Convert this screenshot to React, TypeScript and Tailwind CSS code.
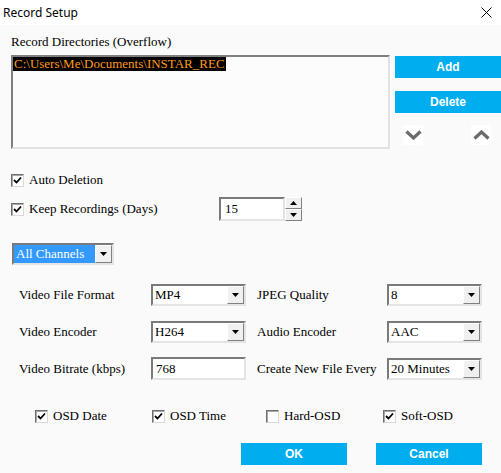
import React from 'react';

const serif = "font-['Liberation_Serif',serif] text-[13px] text-black";

function Check({ checked }: { checked: boolean }) {
  return (
    <span className="w-[13px] h-[13px] shrink-0 bg-white border border-t-[#6e6e6e] border-l-[#6e6e6e] border-r-[#d8d8d8] border-b-[#d8d8d8] shadow-[inset_1px_1px_0_#a8a8a8] flex items-center justify-center">
      {checked && (
        <svg width="9" height="9" viewBox="0 0 9 9">
          <path d="M1 4 L3.5 6.5 L8 1.5" stroke="#000" strokeWidth="1.8" fill="none" />
        </svg>
      )}
    </span>
  );
}

function CheckLabel({ checked, label, width }: { checked: boolean; label: string; width?: string }) {
  return (
    <div className={`flex items-center gap-[5px] ${width ?? ''}`}>
      <Check checked={checked} />
      <span className={serif}>{label}</span>
    </div>
  );
}

function Arrow({ up }: { up?: boolean }) {
  return (
    <svg width="7" height="4" viewBox="0 0 7 4">
      <path d={up ? 'M0 4 L3.5 0 L7 4 Z' : 'M0 0 L7 0 L3.5 4 Z'} fill="#000" />
    </svg>
  );
}

function Select({ value, width = 'w-[95px]', highlight }: { value: string; width?: string; highlight?: boolean }) {
  return (
    <div className={`${width} h-[22px] flex border-2 border-t-[#7a7a7a] border-l-[#7a7a7a] border-r-[#e4e4e4] border-b-[#e4e4e4] bg-white`}>
      <div className={`flex-1 flex items-center px-[2px] ${highlight ? 'bg-[#3399ff] text-white' : ''}`}>
        <span className={`font-['Liberation_Serif',serif] text-[13px] ${highlight ? 'text-white' : 'text-black'}`}>{value}</span>
      </div>
      <div className="w-[17px] bg-[#f0f0f0] border border-t-white border-l-white border-r-[#808080] border-b-[#808080] flex items-center justify-center">
        <Arrow />
      </div>
    </div>
  );
}

function BlueButton({ label, className = '' }: { label: string; className?: string }) {
  return (
    <button className={`h-[22px] bg-[#00adef] text-white font-['Liberation_Sans',sans-serif] font-bold text-[12px] flex items-center justify-center ${className}`}>
      {label}
    </button>
  );
}

function Chevron({ up }: { up?: boolean }) {
  return (
    <div className="w-[20px] h-[20px] bg-white flex items-center justify-center">
      <svg width="17" height="10" viewBox="0 0 17 10">
        <path d={up ? 'M1.5 8.5 L8.5 2 L15.5 8.5' : 'M1.5 1.5 L8.5 8 L15.5 1.5'} stroke="#6b6b6b" strokeWidth="3.2" fill="none" />
      </svg>
    </div>
  );
}

export default function App() {
  return (
    <div className="w-[501px] h-[473px] bg-[#fafafa] flex flex-col overflow-hidden">
      <div className="h-[25px] bg-white flex items-center justify-between pl-[3px] pr-[9px]">
        <span className="font-['Noto_Sans',sans-serif] text-[12px] text-black">Record Setup</span>
        <svg width="11" height="11" viewBox="0 0 11 11">
          <path d="M0.5 0.5 L10.5 10.5 M10.5 0.5 L0.5 10.5" stroke="#000" strokeWidth="1" />
        </svg>
      </div>

      <div className="pl-[11px] flex flex-col">
        <div className={`${serif} mt-[9px] h-[16px] leading-[16px]`}>Record Directories (Overflow)</div>

        <div className="flex mt-[5px]">
          <div className="w-[379px] h-[94px] border-2 border-t-[#7f7f7f] border-l-[#7f7f7f] border-r-[#e2e2e2] border-b-[#e2e2e2] bg-[#fcfcfc] flex flex-col items-start">
            <div className="flex items-center h-[14px] bg-black px-[1px]">
              <span className="font-['Liberation_Serif',serif] text-[13px] text-[#ff9a1f] leading-[14px]">C:\Users\Me\Documents\INSTAR_REC</span>
            </div>
          </div>
          <div className="ml-[5px] w-[106px] flex flex-col">
            <BlueButton label="Add" className="mt-[1px] w-[106px] h-[21px]" />
            <BlueButton label="Delete" className="mt-[13px] w-[106px] h-[21px]" />
            <div className="mt-[12px] flex pl-[8px] gap-[48px]">
              <Chevron />
              <Chevron up />
            </div>
          </div>
        </div>

        <div className="mt-[23px] h-[16px] flex items-center">
          <CheckLabel checked label="Auto Deletion" />
        </div>

        <div className="mt-[9px] h-[24px] flex items-center">
          <CheckLabel checked label="Keep Recordings (Days)" width="w-[208px]" />
          <div className="w-[66px] h-[24px] border-2 border-t-[#7a7a7a] border-l-[#7a7a7a] border-r-[#e4e4e4] border-b-[#e4e4e4] bg-white flex items-center px-[4px]">
            <span className={serif}>15</span>
          </div>
          <div className="w-[17px] h-[24px] flex flex-col">
            <div className="h-[12px] bg-[#f0f0f0] border border-t-white border-l-white border-r-[#808080] border-b-[#808080] flex items-center justify-center">
              <Arrow up />
            </div>
            <div className="h-[12px] bg-[#f0f0f0] border border-t-white border-l-white border-r-[#808080] border-b-[#808080] flex items-center justify-center">
              <Arrow />
            </div>
          </div>
        </div>

        <div className="mt-[22px] ml-[1px]">
          <Select value="All Channels" width="w-[102px]" highlight />
        </div>

        <div className="mt-[19px] flex items-center pl-[8px]">
          <span className={`${serif} w-[132px]`}>Video File Format</span>
          <Select value="MP4" />
          <span className={`${serif} w-[130px] ml-[11px]`}>JPEG Quality</span>
          <Select value="8" />
        </div>

        <div className="mt-[15px] flex items-center pl-[8px]">
          <span className={`${serif} w-[132px]`}>Video Encoder</span>
          <Select value="H264" />
          <span className={`${serif} w-[130px] ml-[11px]`}>Audio Encoder</span>
          <Select value="AAC" />
        </div>

        <div className="mt-[14px] flex items-center pl-[8px]">
          <span className={`${serif} w-[132px]`}>Video Bitrate (kbps)</span>
          <div className="w-[95px] h-[23px] border-2 border-t-[#7a7a7a] border-l-[#7a7a7a] border-r-[#e4e4e4] border-b-[#e4e4e4] bg-white flex items-center px-[3px]">
            <span className={serif}>768</span>
          </div>
          <span className={`${serif} w-[130px] ml-[11px]`}>Create New File Every</span>
          <Select value="20 Minutes" />
        </div>

        <div className="mt-[28px] h-[16px] flex items-center pl-[24px]">
          <CheckLabel checked label="OSD Date" width="w-[117px]" />
          <CheckLabel checked label="OSD Time" width="w-[114px]" />
          <CheckLabel checked={false} label="Hard-OSD" width="w-[117px]" />
          <CheckLabel checked label="Soft-OSD" />
        </div>

        <div className="mt-[19px] flex justify-end pr-[19px] gap-[29px]">
          <BlueButton label="OK" className="w-[106px]" />
          <BlueButton label="Cancel" className="w-[106px]" />
        </div>
      </div>
    </div>
  );
}
